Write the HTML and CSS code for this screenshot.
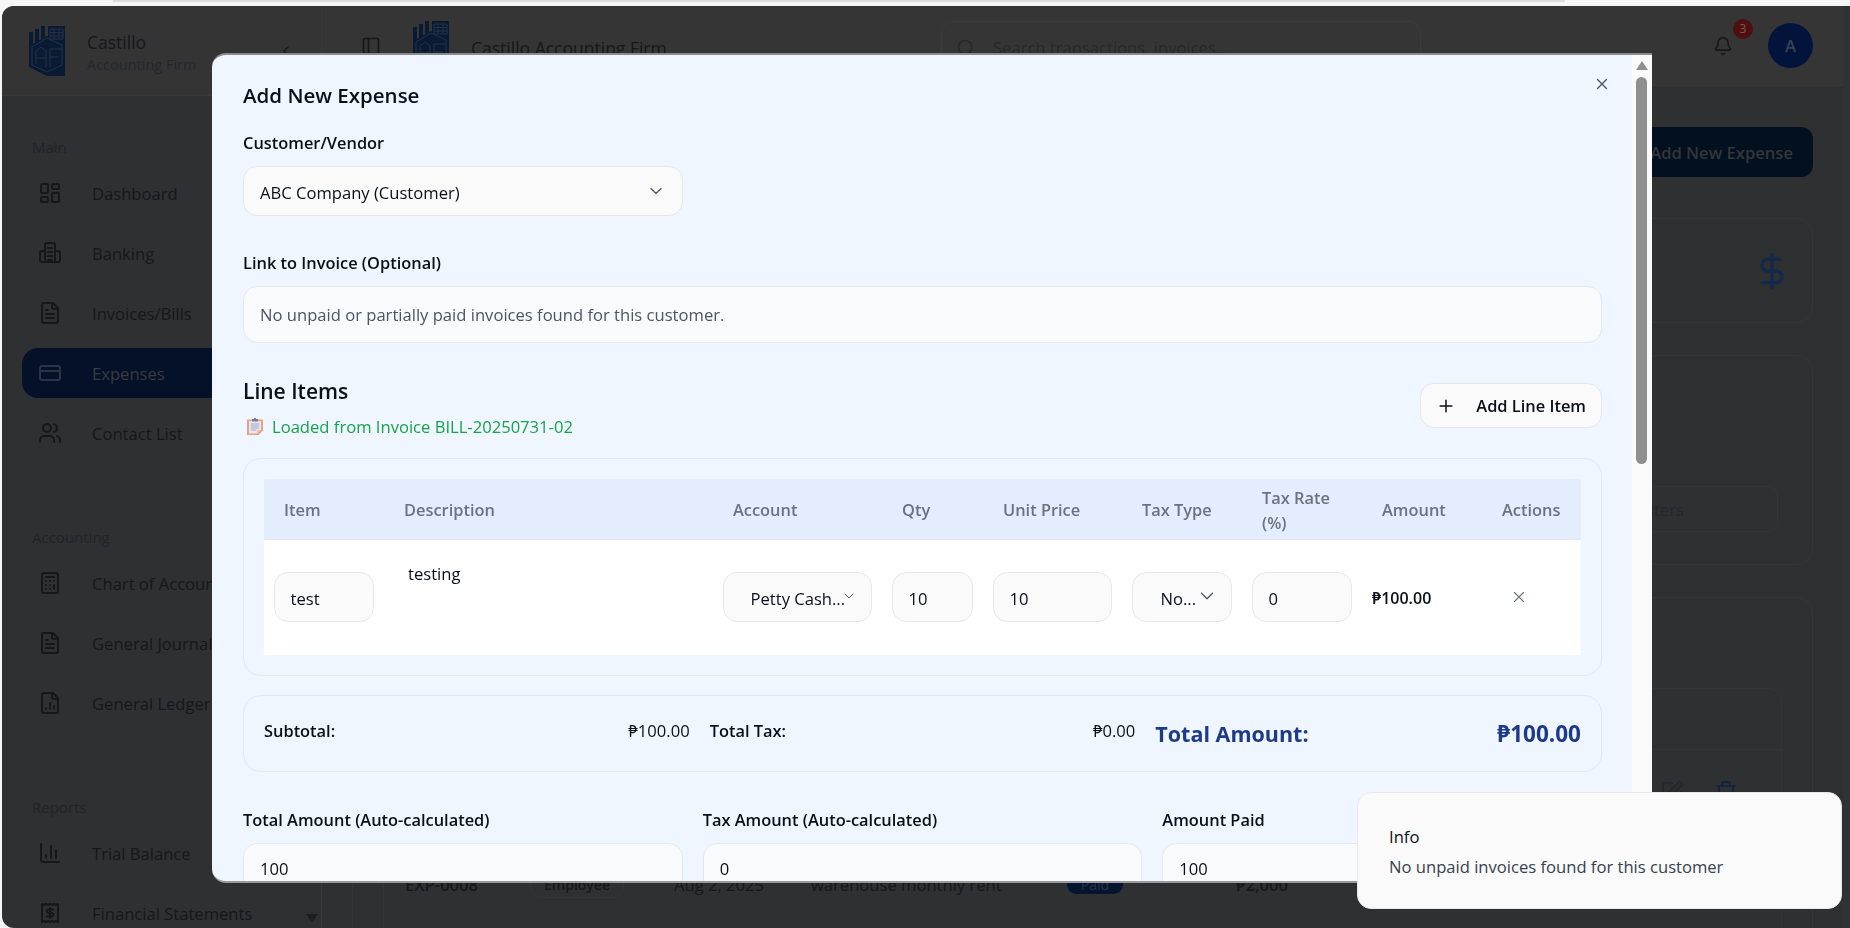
FILE: index.html
```html
<!DOCTYPE html>
<html lang="en">
<head>
  <meta charset="utf-8">
  <title>Castillo Accounting Firm - Expenses</title>
  <link rel="stylesheet" href="styles.css">
</head>
<body>
  <svg class="sprites" width="0" height="0">
    <symbol id="i-dashboard" viewBox="0 0 24 24"><rect x="3" y="3" width="7" height="9" rx="1"/><rect x="14" y="3" width="7" height="5" rx="1"/><rect x="14" y="12" width="7" height="9" rx="1"/><rect x="3" y="16" width="7" height="5" rx="1"/></symbol>
    <symbol id="i-bank" viewBox="0 0 24 24"><path d="M7 21V4a2 2 0 0 1 2-2h6a2 2 0 0 1 2 2v17"/><path d="M7 10H4a2 2 0 0 0-2 2v7a2 2 0 0 0 2 2h16a2 2 0 0 0 2-2v-7a2 2 0 0 0-2-2h-3"/><path d="M10 7h4M10 11h4M10 15h4M10 19h4"/></symbol>
    <symbol id="i-file" viewBox="0 0 24 24"><path d="M15 2H6a2 2 0 0 0-2 2v16a2 2 0 0 0 2 2h12a2 2 0 0 0 2-2V7Z"/><path d="M14 2v4a2 2 0 0 0 2 2h4"/><path d="M10 9H8M16 13H8M16 17H8"/></symbol>
    <symbol id="i-card" viewBox="0 0 24 24"><rect x="2" y="5" width="20" height="14" rx="2"/><path d="M2 10h20"/></symbol>
    <symbol id="i-users" viewBox="0 0 24 24"><path d="M16 21v-2a4 4 0 0 0-4-4H6a4 4 0 0 0-4 4v2"/><circle cx="9" cy="7" r="4"/><path d="M22 21v-2a4 4 0 0 0-3-3.87"/><path d="M16 3.13a4 4 0 0 1 0 7.75"/></symbol>
    <symbol id="i-calc" viewBox="0 0 24 24"><rect x="4" y="2" width="16" height="20" rx="2"/><path d="M8 6h8M16 14v4M16 10h.01M12 10h.01M8 10h.01M12 14h.01M8 14h.01M12 18h.01M8 18h.01"/></symbol>
    <symbol id="i-ledger" viewBox="0 0 24 24"><path d="M15 2H6a2 2 0 0 0-2 2v16a2 2 0 0 0 2 2h12a2 2 0 0 0 2-2V7Z"/><path d="M14 2v4a2 2 0 0 0 2 2h4"/><path d="M8 18v-1M12 18v-6M16 18v-3"/></symbol>
    <symbol id="i-chart" viewBox="0 0 24 24"><path d="M3 3v16a2 2 0 0 0 2 2h16"/><path d="M18 17V9M13 17V5M8 17v-3"/></symbol>
    <symbol id="i-receipt" viewBox="0 0 24 24"><path d="M4 3l2 1 2-1 2 1 2-1 2 1 2-1 2 1 2-1v18l-2-1-2 1-2-1-2 1-2-1-2 1-2-1-2 1Z"/><path d="M15.500 8.500H10.500a1.750 1.750 0 0 0 0 3.500h3a1.750 1.750 0 0 1 0 3.500H8.500M12 7v10"/></symbol>
    <symbol id="i-chevron" viewBox="0 0 24 24"><path d="m6 9 6 6 6-6"/></symbol>
    <symbol id="i-x" viewBox="0 0 24 24"><path d="M18 6 6 18M6 6l12 12"/></symbol>
    <symbol id="i-logo" viewBox="0 0 36 50">
      <path class="logo-fill" d="M0 6h4v13l-4 2ZM6 3h4v13l-4 2ZM12 0h4v11l-4 2ZM19 0h17v50H19Z"/>
      <path class="logo-fill" d="M18 10 36 18V41L18 50 0 41V20Z"/>
      <path class="logo-line" d="M21 3h13v10H21ZM21 6.500h13M21 10h13M25 3v10M30 3v10"/>
      <path class="logo-line" d="M18 12 33 19V39L18 46 3 39V21ZM7 38V25L12 21 17 25V41M7 32H17M21 41V23H32M21 31H30"/>
    </symbol>
  </svg>

  <div class="top-strip"><div class="top-strip-bar"></div></div>

  <div class="app">
    <aside class="sidebar">
      <div class="brand">
        <svg class="brand-logo"><use href="#i-logo"/></svg>
        <div class="brand-text">
          <div class="brand-name">Castillo</div>
          <div class="brand-sub">Accounting Firm</div>
        </div>
        <svg class="icon brand-toggle" viewBox="0 0 24 24"><path d="m15 18-6-6 6-6"/></svg>
      </div>
      <nav class="nav">
        <div class="nav-section">
          <div class="nav-label">Main</div>
          <a class="nav-item"><svg class="icon"><use href="#i-dashboard"/></svg>Dashboard</a>
          <a class="nav-item"><svg class="icon"><use href="#i-bank"/></svg>Banking</a>
          <a class="nav-item"><svg class="icon"><use href="#i-file"/></svg>Invoices/Bills</a>
          <a class="nav-item active"><svg class="icon"><use href="#i-card"/></svg>Expenses</a>
          <a class="nav-item"><svg class="icon"><use href="#i-users"/></svg>Contact List</a>
        </div>
        <div class="nav-section">
          <div class="nav-label">Accounting</div>
          <a class="nav-item"><svg class="icon"><use href="#i-calc"/></svg>Chart of Accounts</a>
          <a class="nav-item"><svg class="icon"><use href="#i-file"/></svg>General Journal</a>
          <a class="nav-item"><svg class="icon"><use href="#i-ledger"/></svg>General Ledger</a>
        </div>
        <div class="nav-section">
          <div class="nav-label">Reports</div>
          <a class="nav-item"><svg class="icon"><use href="#i-chart"/></svg>Trial Balance</a>
          <a class="nav-item"><svg class="icon"><use href="#i-receipt"/></svg>Financial Statements</a>
        </div>
      </nav>
      <div class="sidebar-arrow"></div>
    </aside>

    <div class="main">
      <header class="topbar">
        <svg class="icon topbar-toggle" viewBox="0 0 24 24"><rect x="3" y="3" width="18" height="18" rx="2"/><path d="M9 3v18"/></svg>
        <svg class="topbar-logo"><use href="#i-logo"/></svg>
        <div class="topbar-title">Castillo Accounting Firm</div>
        <div class="search">
          <svg class="icon search-icon" viewBox="0 0 24 24"><circle cx="11" cy="11" r="8"/><path d="m21 21-4.300-4.300"/></svg>
          Search transactions, invoices...
        </div>
        <div class="bell">
          <svg class="icon" viewBox="0 0 24 24"><path d="M10.268 21a2 2 0 0 0 3.464 0"/><path d="M3.262 15.326A1 1 0 0 0 4 17h16a1 1 0 0 0 .74-1.673C19.410 13.956 18 12.499 18 8A6 6 0 0 0 6 8c0 4.499-1.411 5.956-2.738 7.326"/></svg>
          <span class="bell-badge">3</span>
        </div>
        <div class="avatar">A</div>
      </header>

      <div class="content">
        <div class="page-actions"><button class="btn-primary">Add New Expense</button></div>
        <div class="card card-stat">
          <svg class="icon stat-icon" viewBox="0 0 24 24"><path d="M12 2v20M17 5H9.500a3.500 3.500 0 0 0 0 7h5a3.500 3.500 0 0 1 0 7H6"/></svg>
        </div>
        <div class="card card-filter">
          <div class="filter-input">Filters</div>
        </div>
        <div class="card card-list">
          <div class="list-inner">
            <div class="list-row list-row-actions">
              <svg class="icon list-edit" viewBox="0 0 24 24"><path d="M12 3H5a2 2 0 0 0-2 2v14a2 2 0 0 0 2 2h14a2 2 0 0 0 2-2v-7"/><path d="M18.400 2.600a2 2 0 0 1 3 3L12 15l-4 1 1-4Z"/></svg>
              <svg class="icon list-trash" viewBox="0 0 24 24"><path d="M3 6h18M19 6v14a2 2 0 0 1-2 2H7a2 2 0 0 1-2-2V6M8 6V4a2 2 0 0 1 2-2h4a2 2 0 0 1 2 2v2"/></svg>
            </div>
            <div class="list-row list-row-data">
              <span class="list-id">EXP-0008</span>
              <span class="list-type"><span class="list-type-pill">Employee</span></span>
              <span class="list-date">Aug 2, 2025</span>
              <span class="list-desc">warehouse monthly rent</span>
              <span class="list-status">Paid</span>
              <span class="list-amount">₱2,000</span>
            </div>
          </div>
        </div>
      </div>
    </div>
    <div class="page-scroll"></div>
  </div>

  <div class="modal">
    <div class="modal-body">
      <svg class="icon modal-close"><use href="#i-x"/></svg>
      <h2 class="modal-title">Add New Expense</h2>

      <label class="label">Customer/Vendor</label>
      <div class="field field-select field-half"><span>ABC Company (Customer)</span><svg class="icon"><use href="#i-chevron"/></svg></div>

      <label class="label label-gap">Link to Invoice (Optional)</label>
      <div class="field field-note">No unpaid or partially paid invoices found for this customer.</div>

      <div class="items-head">
        <div>
          <h3 class="items-title">Line Items</h3>
          <div class="items-source">
            <svg class="clipboard" viewBox="0 0 16 17">
              <path fill="#e8a27c" d="M0 1.500h16v11l-4.500 4.500H0Z"/>
              <path fill="#e6e3f3" d="M2 3h12v9h-3.500v3.500H2Z"/>
              <path fill="#f4c8a4" d="M10.500 12H14l-3.500 3.500Z"/>
              <path fill="#7d7a94" d="M5 1h2V0h2v1h2v2.500H5Z"/>
              <path stroke="#a9a6c0" d="M4 6h8M4 8h8M4 10h8M4 12h5"/>
            </svg>
            Loaded from Invoice BILL-20250731-02
          </div>
        </div>
        <button class="btn-add"><svg class="icon" viewBox="0 0 24 24"><path d="M5 12h14M12 5v14"/></svg>Add Line Item</button>
      </div>

      <div class="items-card">
        <table class="items">
          <colgroup>
            <col class="col-item"><col class="col-desc"><col class="col-account"><col class="col-qty"><col class="col-price">
            <col class="col-type"><col class="col-rate"><col class="col-amount"><col class="col-actions">
          </colgroup>
          <thead>
            <tr>
              <th>Item</th><th>Description</th><th>Account</th><th>Qty</th><th>Unit Price</th>
              <th>Tax Type</th><th>Tax Rate (%)</th><th>Amount</th><th>Actions</th>
            </tr>
          </thead>
          <tbody>
            <tr>
              <td><div class="cell-input">test</div></td>
              <td class="cell-desc">testing</td>
              <td><div class="cell-input cell-select cell-account"><span>Petty Cash...</span><svg class="icon"><use href="#i-chevron"/></svg></div></td>
              <td><div class="cell-input">10</div></td>
              <td><div class="cell-input">10</div></td>
              <td><div class="cell-input cell-select cell-tax"><span>No...</span><svg class="icon"><use href="#i-chevron"/></svg></div></td>
              <td><div class="cell-input">0</div></td>
              <td class="cell-amount">₱100.00</td>
              <td><svg class="icon cell-remove"><use href="#i-x"/></svg></td>
            </tr>
          </tbody>
        </table>
      </div>

      <div class="totals">
        <div class="total-cell"><span class="total-label">Subtotal:</span><span>₱100.00</span></div>
        <div class="total-cell"><span class="total-label">Total Tax:</span><span>₱0.00</span></div>
        <div class="total-cell total-grand"><span>Total Amount:</span><span class="total-grand-value">₱100.00</span></div>
      </div>

      <div class="amounts">
        <div>
          <label class="label">Total Amount (Auto-calculated)</label>
          <div class="field field-plain">100</div>
        </div>
        <div>
          <label class="label">Tax Amount (Auto-calculated)</label>
          <div class="field field-plain">0</div>
        </div>
        <div>
          <label class="label">Amount Paid</label>
          <div class="field field-plain">100</div>
        </div>
      </div>
    </div>
    <div class="modal-scroll">
      <div class="scroll-up"></div>
      <div class="scroll-thumb"></div>
    </div>
  </div>

  <div class="toast">
    <div class="toast-title">Info</div>
    <div class="toast-text">No unpaid invoices found for this customer</div>
  </div>
</body>
</html>
```

FILE: styles.css
```css
* {
  box-sizing: border-box;
}
html, body {
  height: 100%;
  margin: 0;
  overflow: hidden;
}
body {
  font-family: "Open Sans", "Noto Sans", sans-serif;
  font-size: 16.600px;
  background: #f6f6f6;
  color: #0b0f19;
}
.sprites {
  position: absolute;
}
.icon {
  display: block;
  width: 24px;
  height: 24px;
  flex: none;
  fill: none;
  stroke: currentColor;
  stroke-width: 2;
  stroke-linecap: round;
  stroke-linejoin: round;
}
h2, h3 {
  margin: 0;
}

/* backdrop page: colours are what shows through the dark modal overlay */
.top-strip {
  height: 6px;
}
.top-strip-bar {
  width: 1452px;
  height: 2px;
  margin-left: 113px;
  background: #dcdcdc;
}
.app {
  display: flex;
  height: 922px;
  margin-left: 2px;
  border-radius: 12px 0 0 12px;
  overflow: hidden;
  background: #2f3031;
  color: #161719;
}
.sidebar {
  position: relative;
  width: 320px;
  flex: none;
  border-right: 1px solid #383939;
}
.brand {
  display: flex;
  align-items: center;
  height: 90px;
  padding: 0 27px;
  background: #343435;
  border-bottom: 1px solid #383939;
}
.brand-logo {
  width: 36px;
  height: 50px;
  margin-right: 22px;
}
.logo-fill {
  fill: #0a1a33;
}
.logo-line {
  fill: none;
  stroke: #243149;
  stroke-width: 1;
}
.brand-text {
  flex: 1;
  padding-top: 3px;
}
.brand-name {
  font-size: 17.500px;
  font-weight: 500;
  line-height: 24px;
}
.brand-sub {
  font-size: 14.500px;
  line-height: 21px;
  color: #24262a;
}
.brand-toggle {
  width: 16px;
  height: 16px;
}
.nav {
  padding: 41px 20px 0;
}
.nav-section {
  margin-bottom: 69px;
}
.nav-label {
  height: 20px;
  margin: 0 0 11px 10px;
  font-size: 15px;
  line-height: 20px;
  color: #1f232a;
}
.nav-item {
  display: flex;
  align-items: center;
  gap: 30px;
  height: 50px;
  margin-bottom: 10px;
  padding-left: 16px;
  border-radius: 16px;
  font-weight: 500;
}
.nav-section .nav-item:last-child {
  margin-bottom: 0;
}
.nav-item.active {
  background: #051029;
  color: #383b40;
}
.nav-item.active .icon {
  color: #2b3446;
}
.sidebar-arrow {
  position: absolute;
  right: 3px;
  bottom: 5px;
  border: 6px solid transparent;
  border-top: 9px solid #1d1e1f;
  border-bottom: 0;
}

.main {
  flex: 1;
  min-width: 0;
}
.page-scroll {
  width: 7px;
  flex: none;
  background: #313233;
}
.topbar {
  display: flex;
  align-items: center;
  height: 80px;
  padding: 0 30px 0 39px;
  background: #353535;
  border-bottom: 1px solid #383838;
}
.topbar-toggle {
  width: 20px;
  height: 20px;
  margin-right: 32px;
}
.topbar-logo {
  width: 36px;
  height: 50px;
  margin-right: 22px;
}
.topbar-title {
  width: 470px;
  padding-top: 4px;
  font-weight: 500;
  font-size: 17.500px;
}
.search {
  display: flex;
  align-items: center;
  gap: 17px;
  width: 480px;
  height: 50px;
  padding: 4px 0 0 14px;
  border: 1px solid #3b3b3b;
  border-radius: 12px;
  color: #27282a;
}
.search-icon {
  width: 20px;
  height: 20px;
}
.bell {
  position: relative;
  margin-left: auto;
  margin-right: 35px;
}
.bell .icon {
  width: 20px;
  height: 20px;
}
.bell-badge {
  position: absolute;
  top: -17px;
  left: 20px;
  width: 20px;
  height: 20px;
  border-radius: 50%;
  background: #4f0f0f;
  color: #7d5a5a;
  font-size: 12px;
  line-height: 20px;
  text-align: center;
}
.avatar {
  width: 45px;
  height: 45px;
  border-radius: 50%;
  background: #03143c;
  color: #3a4252;
  font-weight: 600;
  line-height: 45px;
  text-align: center;
}
.content {
  padding: 41px 30px 0;
}
.page-actions {
  display: flex;
  justify-content: flex-end;
}
.btn-primary {
  height: 50px;
  padding: 0 20px;
  border: 0;
  border-radius: 12px;
  background: #03101f;
  color: #33363b;
  font-family: inherit;
  font-size: inherit;
  font-weight: 600;
}
.card {
  border: 1px solid #353637;
  border-radius: 16px;
}
.card-stat {
  display: flex;
  align-items: center;
  justify-content: flex-end;
  height: 105px;
  margin-top: 41px;
  padding-right: 20px;
}
.stat-icon {
  width: 40px;
  height: 40px;
  color: #14294a;
}
.card-filter {
  display: flex;
  align-items: flex-end;
  justify-content: flex-end;
  height: 210px;
  margin-top: 32px;
  padding: 0 34px 32px;
}
.filter-input {
  width: 400px;
  height: 46px;
  padding-left: 258px;
  border: 1px solid #343536;
  border-radius: 10px;
  line-height: 46px;
  color: #25272a;
}
.card-list {
  height: 400px;
  margin-top: 32px;
  padding: 90px 30px 0;
}
.list-inner {
  height: 300px;
  border: 1px solid #343536;
  border-radius: 12px 12px 0 0;
  padding-top: 60px;
}
.list-row {
  display: flex;
  align-items: center;
  height: 85px;
  border-top: 1px solid #343536;
}
.list-row-actions {
  justify-content: flex-end;
  gap: 30px;
  padding-right: 43px;
}
.list-row-data {
  height: 100px;
}
.list-edit, .list-trash {
  width: 24px;
  height: 24px;
}
.list-edit {
  color: #25272a;
}
.list-trash {
  color: #14233b;
}
.list-id {
  width: 138px;
  margin-left: 21px;
  font-weight: 600;
}
.list-type {
  width: 131px;
  font-size: 14px;
  font-weight: 600;
}
.list-type-pill {
  margin-left: -13px;
  padding: 3px 13px;
  border: 1px solid #343536;
  border-radius: 12px;
}
.list-date {
  width: 137px;
}
.list-desc {
  width: 256px;
}
.list-status {
  width: 56px;
  margin-right: 113px;
  border-radius: 12px;
  background: #05142f;
  color: #2a3344;
  font-size: 14px;
  text-align: center;
}
.list-amount {
  font-weight: 600;
}

/* modal */
.modal {
  position: fixed;
  left: 212px;
  top: 53px;
  display: flex;
  width: 1440px;
  height: 830px;
  border-top: 2px solid #8a8a8a;
  border-bottom: 2px solid #9a9a9a;
  border-radius: 14px 0 0 14px;
  overflow: hidden;
  background: #eff6ff;
}
.modal-body {
  position: relative;
  flex: 1;
  min-width: 0;
  padding: 27px 30px 0 31px;
  overflow: hidden;
}
.modal-close {
  position: absolute;
  top: 20px;
  right: 21px;
  width: 18px;
  height: 18px;
  stroke-width: 1.800;
  color: #4b5563;
}
.modal-title {
  font-size: 20.500px;
  line-height: 27px;
  font-weight: 600;
}
.label {
  display: block;
  margin: 22px 0 11px;
  font-size: 16.400px;
  font-weight: 600;
  line-height: 24px;
}
.label-gap {
  margin-top: 35px;
}
.field {
  display: flex;
  align-items: center;
  height: 50px;
  padding: 0 16px;
  border: 1px solid #e5e7eb;
  border-radius: 14px;
  background: #fafafa;
}
.field-half {
  width: 440px;
}
.field-select {
  justify-content: space-between;
}
.field-select span {
  padding-top: 3px;
}
.field-select .icon {
  width: 20px;
  height: 20px;
  stroke-width: 1.500;
  color: #4b5563;
}
.field-note {
  height: 57px;
  background: #f9fafb;
  color: #4b5563;
}
.items-head {
  display: flex;
  justify-content: space-between;
  align-items: flex-start;
  margin-top: 34px;
}
.items-title {
  font-size: 21px;
  line-height: 28px;
  font-weight: 600;
}
.items-source {
  display: flex;
  align-items: center;
  gap: 9px;
  height: 24px;
  margin-top: 9px;
  padding-left: 4px;
  color: #16a34a;
}
.clipboard {
  width: 16px;
  height: 17px;
  flex: none;
}
.btn-add {
  display: flex;
  align-items: center;
  gap: 20px;
  height: 45px;
  margin-top: 6px;
  padding: 0 15px;
  border: 1px solid #e5e7eb;
  border-radius: 14px;
  background: #fafafa;
  color: #0b0f19;
  font-family: inherit;
  font-size: 16.400px;
  font-weight: 600;
}
.btn-add .icon {
  width: 20px;
  height: 20px;
  stroke-width: 1.800;
}
.items-card {
  margin-top: 20px;
  padding: 20px;
  border: 1px solid #e5e7eb;
  border-radius: 18px;
}
.items {
  width: 1317px;
  table-layout: fixed;
  border-collapse: collapse;
  background: #fff;
}
.col-item { width: 120px; }
.col-desc { width: 329px; }
.col-account { width: 169px; }
.col-qty { width: 101px; }
.col-price { width: 139px; }
.col-type { width: 120px; }
.col-rate { width: 120px; }
.col-amount { width: 120px; }
.col-actions { width: 99px; }
.items th {
  height: 60px;
  padding: 2px 20px 0;
  background: #e3edfd;
  border-bottom: 1px solid #e5e7eb;
  color: #6b7280;
  font-size: 16.400px;
  font-weight: 600;
  line-height: 25px;
  text-align: left;
}
.items td {
  height: 116px;
  padding: 0 10.500px 0 9.500px;
}
.cell-input {
  display: flex;
  align-items: center;
  height: 50px;
  padding: 3px 16px 0;
  border: 1px solid #e5e7eb;
  border-radius: 14px;
  background: #fafafa;
}
.cell-select {
  padding-right: 0;
}
.cell-select .icon {
  stroke-width: 1.400;
  color: #4b5563;
  margin-top: -6px;
}
.cell-account {
  padding-left: 27px;
}
.cell-account .icon {
  width: 16px;
  height: 16px;
  margin-left: -4px;
}
.cell-tax {
  padding-left: 28px;
}
.cell-tax .icon {
  width: 22px;
  height: 22px;
}
.items td.cell-desc {
  padding: 22px 24px 0;
  vertical-align: top;
  line-height: 24px;
}
.items td.cell-amount {
  font-size: 16px;
  font-weight: 600;
  padding: 2px 0 0 10px;
}
.cell-remove {
  width: 18px;
  height: 18px;
  margin-left: 18px;
  stroke-width: 1.500;
  color: #6b7280;
}
.totals {
  display: grid;
  grid-template-columns: repeat(3, 1fr);
  gap: 20px;
  margin-top: 19px;
  height: 77px;
  padding: 23px 20px 0;
  border: 1px solid #e5e7eb;
  border-radius: 18px;
}
.total-cell {
  display: flex;
  justify-content: space-between;
  line-height: 24px;
}
.total-label {
  font-size: 16.400px;
  font-weight: 600;
}
.total-grand {
  font-size: 21.500px;
  font-weight: 700;
  line-height: 30px;
  color: #1e3a8a;
}
.total-grand-value {
  font-size: 22.500px;
}
.amounts {
  display: grid;
  grid-template-columns: repeat(3, 1fr);
  gap: 20px;
  margin-top: 14px;
}
.field-plain {
  align-items: flex-start;
  padding-top: 13px;
  background: #f9fafb;
}

/* scrollbar of the modal */
.modal-scroll {
  width: 20px;
  flex: none;
  padding-top: 6px;
  background: #fafafa;
}
.scroll-up {
  width: 0;
  margin: 0 auto;
  border: 6.500px solid transparent;
  border-bottom: 9px solid #8f8f8f;
  border-top: 0;
}
.scroll-thumb {
  width: 11px;
  height: 387px;
  margin: 7px 0 0 4px;
  border-radius: 6px;
  background: #8f8f8f;
}

/* toast */
.toast {
  position: fixed;
  right: 8px;
  bottom: 19px;
  width: 485px;
  height: 117px;
  padding: 31px 31px;
  border-radius: 14px;
  background: #fafafa;
  border: 1px solid #e8e8e8;
}
.toast-title {
  font-weight: 500;
  line-height: 26px;
}
.toast-text {
  margin-top: 4px;
  line-height: 26px;
  color: #374151;
}
```
